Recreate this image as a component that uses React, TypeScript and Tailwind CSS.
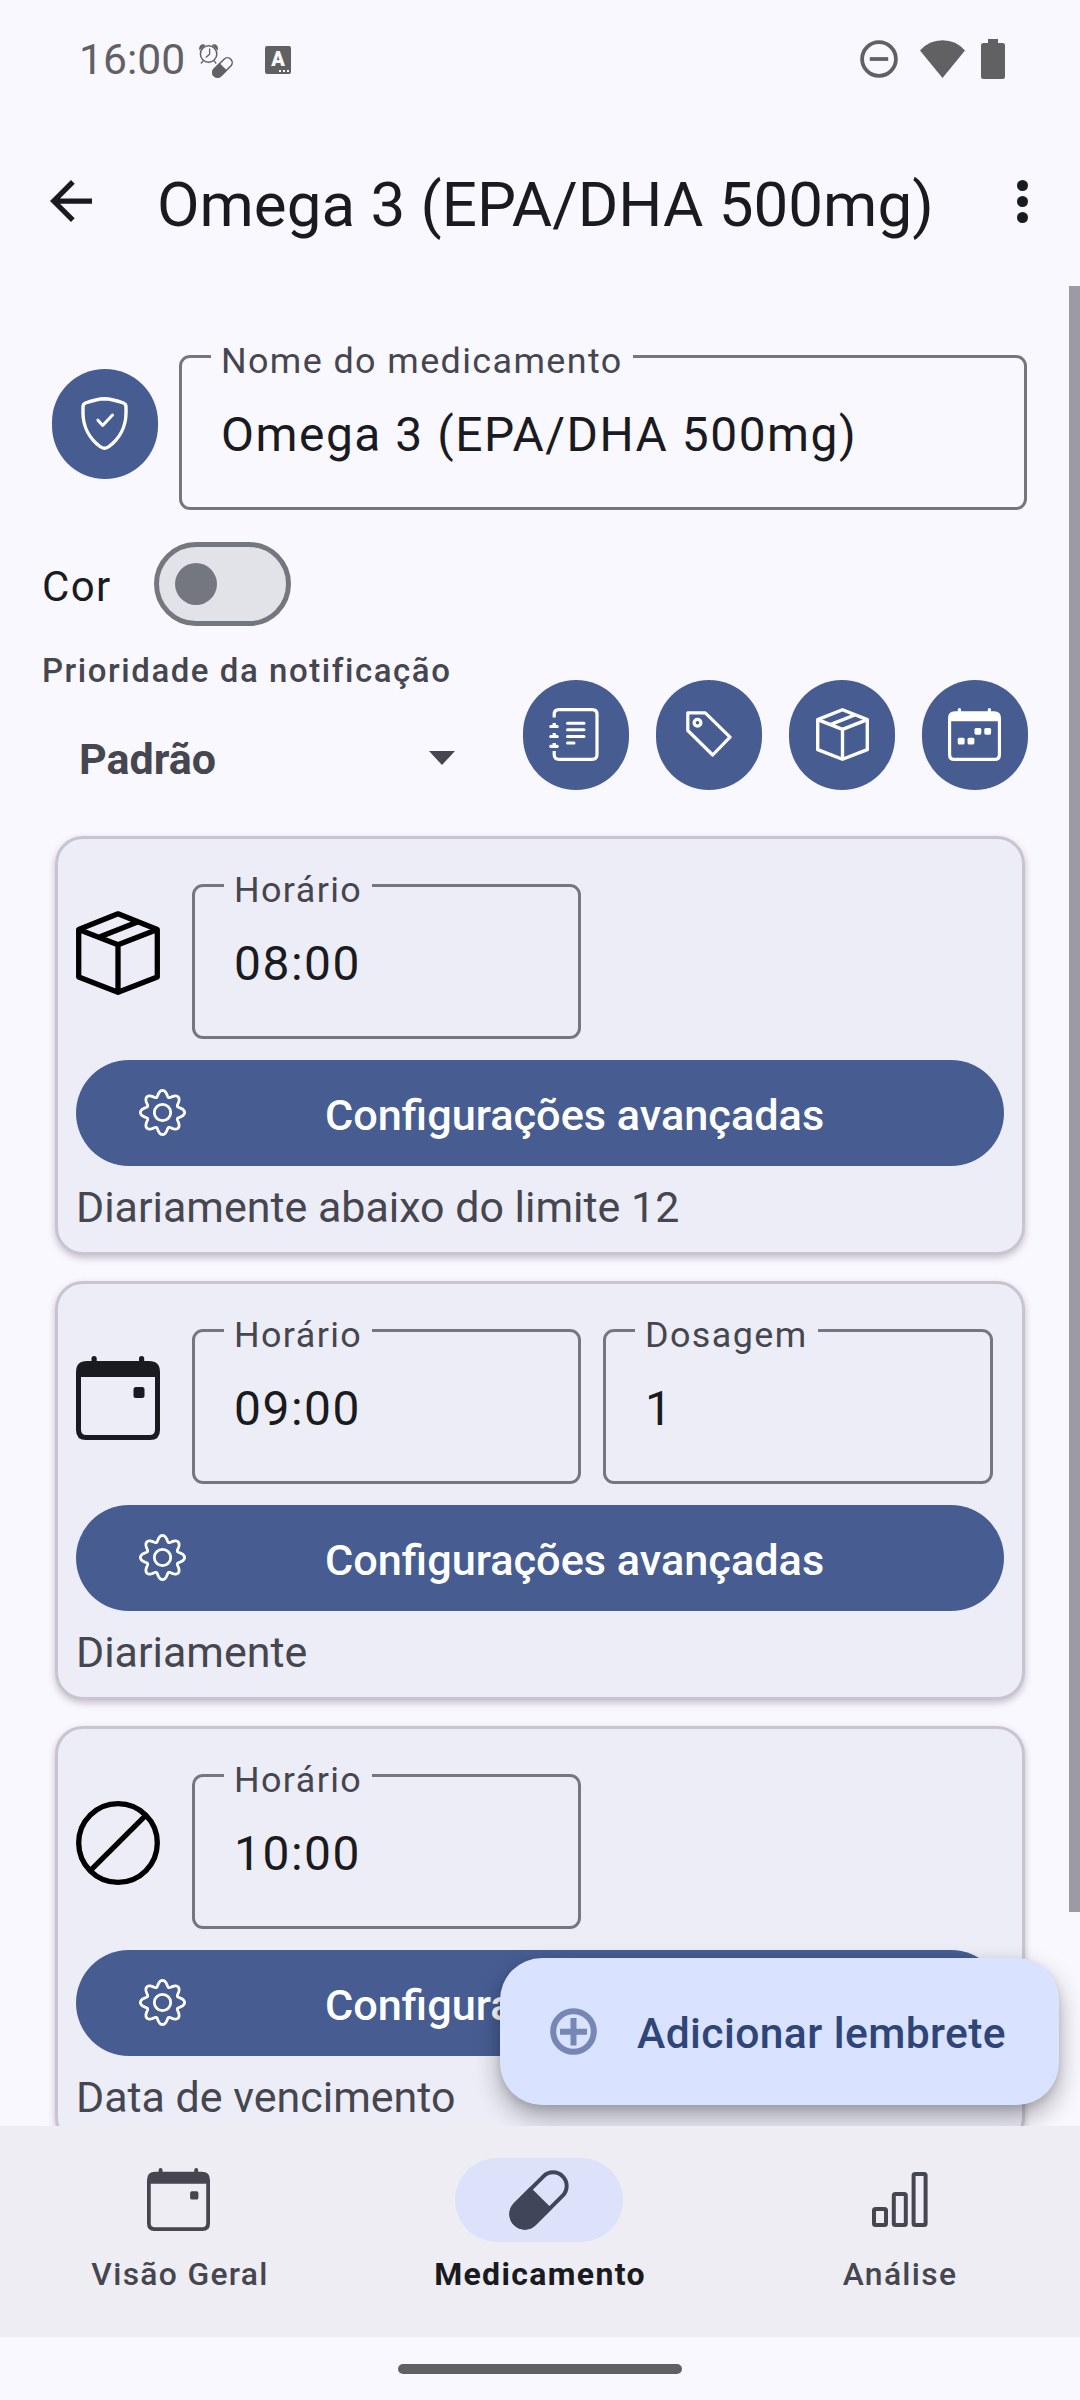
import React from "react";

type IconProps = { className?: string };

const gearPath = (() => {
  const points: string[] = [];
  for (let i = 0; i < 160; i++) {
    const t = (i / 160) * Math.PI * 2;
    const r = 19.1 + 3 * Math.cos(8 * t);
    const a = t + 0.02 * Math.sin(8 * t);
    points.push(`${(23.5 + r * Math.cos(a)).toFixed(2)} ${(23.5 + r * Math.sin(a)).toFixed(2)}`);
  }
  return `M${points.join("L")}Z`;
})();

function GearIcon({ className }: IconProps) {
  return (
    <svg viewBox="0 0 47 47" className={className} fill="none" stroke="currentColor" strokeWidth="2.8">
      <path d={gearPath} strokeLinejoin="round" />
      <circle cx="23.5" cy="23.5" r="8.2" />
    </svg>
  );
}

function BoxIcon({ className }: IconProps) {
  return (
    <svg viewBox="0 0 84 84" className={className} fill="none" stroke="currentColor" strokeWidth="5.3" strokeLinejoin="round">
      <path d="M42 2.8L81.3 18.5V66L42 81.3L2.7 66V18.5Z" />
      <path d="M2.7 18.5L42 33.8L81.3 18.5M42 33.8V81M23.5 26L61.5 11" />
    </svg>
  );
}

function CalendarIcon({ className, week = false }: IconProps & { week?: boolean }) {
  return (
    <svg viewBox="0 0 84 84" className={className} fill="currentColor">
      <rect x="15.500" y="0" width="5.200" height="12" rx="2.600" />
      <rect x="63" y="0" width="5.200" height="12" rx="2.600" />
      <path
        fillRule="evenodd"
        d="M11 5H73Q84 5 84 16V74Q84 84 74 84H10Q0 84 0 74V16Q0 5 11 5ZM5 21V73.500Q5 79 10.500 79H73.500Q79 79 79 73.500V21Z"
      />
      {week ? (
        <>
          <rect x="42" y="31.500" width="10.800" height="10.800" rx="2.500" />
          <rect x="57.500" y="31.500" width="10.800" height="10.800" rx="2.500" />
          <rect x="15.500" y="47" width="10.800" height="10.800" rx="2.500" />
          <rect x="31" y="47" width="10.800" height="10.800" rx="2.500" />
        </>
      ) : (
        <rect x="57.500" y="31" width="11" height="11" rx="2.500" />
      )}
    </svg>
  );
}

function ProhibitIcon({ className }: IconProps) {
  return (
    <svg viewBox="0 0 84 84" className={className} fill="none" stroke="currentColor" strokeWidth="5.300">
      <circle cx="42" cy="42" r="39.300" />
      <path d="M14.300 69.700L69.700 14.300" />
    </svg>
  );
}

function ShieldIcon({ className }: IconProps) {
  return (
    <svg viewBox="0 0 47 53" className={className} fill="none" stroke="currentColor" strokeWidth="3.400" strokeLinecap="round" strokeLinejoin="round">
      <path d="M23.500 1.700C30 1.900 37 4 42.500 6Q45 7 45 10V16C45 30 38 42 28 49.500Q23.500 52.800 19 49.500C9 42 2 30 2 16V10Q2 7 4.500 6C10 4 17 1.900 23.500 1.700Z" />
      <path d="M16.900 23.200L21.700 28.500L31.500 18" strokeWidth="3" />
    </svg>
  );
}

function NotebookIcon({ className }: IconProps) {
  return (
    <svg viewBox="0 0 50 53" className={className} fill="none" stroke="currentColor" strokeWidth="3.200">
      <path d="M5.200 9.500V6.500Q5.200 1.700 10 1.700H43.200Q48 1.700 48 6.500V46.500Q48 51.300 43.200 51.300H10Q5.200 51.300 5.200 46.500V43" />
      <path strokeLinecap="round" d="M1.800 18.500H8.200M1.800 28.500H8.200M1.800 38.300H8.200" />
      <path d="M5.200 15V19M5.200 25V29M5.200 35V39" />
      <path strokeLinecap="round" strokeWidth="3" d="M18.500 15.200H35M18.500 21.800H35M18.500 28.400H35M18.500 35H25" />
    </svg>
  );
}

function TagIcon({ className }: IconProps) {
  return (
    <svg viewBox="0 0 46 46" className={className} fill="none" stroke="currentColor" strokeWidth="3.200" strokeLinejoin="round">
      <path d="M1.800 1.800H19.300L44 26.200L26.700 44L1.800 19.500Z" />
      <circle cx="11.500" cy="11.800" r="3.400" />
    </svg>
  );
}

function PillIcon({ className }: IconProps) {
  return (
    <svg viewBox="0 0 60 60" className={className}>
      <g transform="rotate(-45 30 30)">
        <rect x="-3.500" y="16.400" width="67" height="27.200" rx="13.600" fill="none" stroke="currentColor" strokeWidth="4" />
        <path fill="currentColor" d="M10 14.500H33V45.500H10A15.500 15.500 0 0 1 10 14.500Z" />
      </g>
    </svg>
  );
}

function BarsIcon({ className }: IconProps) {
  return (
    <svg viewBox="0 0 56 55" className={className} fill="none" stroke="currentColor" strokeWidth="4">
      <rect x="2" y="37" width="12" height="16" rx="1.500" />
      <rect x="21.800" y="22" width="12" height="31" rx="1.500" />
      <rect x="41.600" y="2" width="12" height="51" rx="1.500" />
    </svg>
  );
}

function AlarmPillIcon({ className }: IconProps) {
  return (
    <svg viewBox="0 0 34 34" className={className} fill="none" stroke="currentColor">
      <circle cx="9.600" cy="10" r="8.200" strokeWidth="1.500" />
      <path strokeWidth="1.300" d="M10.600 4.500V10.200L6.800 13.600M4.200 16.800L2 19.500M15 16.800L17.200 19.500" />
      <path fill="currentColor" stroke="none" d="M0.500 6.500C-1 1.800 3 -1.200 6.500 1ZM18.700 6.500C20.200 1.800 16.200 -1.200 12.700 1Z" />
      <g transform="translate(13 13) scale(0.350)">
        <g transform="rotate(-45 30 30)">
          <rect x="-3.500" y="16.400" width="67" height="27.200" rx="13.600" strokeWidth="4.500" />
          <path fill="currentColor" stroke="none" d="M10 14.500H33V45.500H10A15.500 15.500 0 0 1 10 14.500Z" />
        </g>
      </g>
    </svg>
  );
}

function StatusBar() {
  return (
    <header className="flex h-[118px] shrink-0 items-center pl-[79px] pr-[75px] text-[#616164]">
      <span className="text-[42.6px] leading-[50px]">16:00</span>
      <AlarmPillIcon className="ml-[14px] mt-[3px] size-[34px]" />
      <div className="relative ml-[32px] mt-[2px] flex h-[28px] w-[26px] justify-center rounded-[2px] bg-[#616164]">
        <span className="text-[20px] font-black leading-[27px] text-[#f9f8ff]">A</span>
        <span className="absolute bottom-[2px] right-[2px] flex gap-[2px]">
          <i className="size-[2px] bg-[#f9f8ff]" />
          <i className="size-[2px] bg-[#f9f8ff]" />
          <i className="size-[2px] bg-[#f9f8ff]" />
        </span>
      </div>
      <svg viewBox="0 0 38 38" className="ml-auto size-[38px]" fill="none" stroke="currentColor" strokeWidth="3.800">
        <circle cx="19" cy="19" r="16.900" />
        <path d="M9.800 19H28.200" />
      </svg>
      <svg viewBox="0 0 45 38" className="ml-[22px] h-[38px] w-[45px]" fill="currentColor">
        <path d="M0 10.500Q9 0.300 22.500 0.300T45 10.500L22.500 38Z" />
      </svg>
      <svg viewBox="0 0 24 40" className="ml-[16px] h-[40px] w-[24px]" fill="currentColor">
        <path d="M7 0H17V4H21.500Q24 4 24 6.500V37.500Q24 40 21.500 40H2.500Q0 40 0 37.500V6.500Q0 4 2.500 4H7Z" />
      </svg>
    </header>
  );
}

function AppBar() {
  return (
    <div className="flex h-[166px] shrink-0 items-center pl-[50px] pr-[52px] text-[#1a1b20]">
      <svg viewBox="4 4 16 16" className="size-[42px]" fill="currentColor">
        <path d="M20 11H7.830l5.590-5.590L12 4l-8 8 8 8 1.410-1.410L7.830 13H20v-2z" />
      </svg>
      <h1 className="ml-[65px] pt-[7px] text-[61.9px] leading-[72px] whitespace-nowrap">Omega 3 (EPA/DHA 500mg)</h1>
      <div className="ml-auto flex flex-col gap-[5px]">
        <i className="size-[11px] rounded-full bg-current" />
        <i className="size-[11px] rounded-full bg-current" />
        <i className="size-[11px] rounded-full bg-current" />
      </div>
    </div>
  );
}

function OutlinedField({ label, value, className, labelClass }: { label: string; value: string; className: string; labelClass: string }) {
  return (
    <div className={`relative h-[155px] rounded-[11px] border-[3px] border-[#757780] pl-[39px] pt-[49px] ${className}`}>
      <span className={`absolute left-[29px] top-[-18px] px-[10px] text-[35.9px] leading-[42px] tracking-[0.039em] whitespace-nowrap text-[#45464f] ${labelClass}`}>
        {label}
      </span>
      <span className="block text-[47.9px] leading-[56px] tracking-[0.032em] whitespace-nowrap text-[#1a1b20]">{value}</span>
    </div>
  );
}

function RoundButton({ children, className = "" }: { children: React.ReactNode; className?: string }) {
  return (
    <button className={`flex h-[110px] w-[106px] shrink-0 items-center justify-center rounded-full bg-[#475d92] text-white ${className}`}>
      {children}
    </button>
  );
}

type Reminder = { icon: React.ReactNode; time: string; dose?: string; note: string };

const reminders: Reminder[] = [
  { icon: <BoxIcon className="size-[84px] text-black" />, time: "08:00", note: "Diariamente abaixo do limite 12" },
  { icon: <CalendarIcon className="size-[84px] text-[#1a1b20]" />, time: "09:00", dose: "1", note: "Diariamente" },
  { icon: <ProhibitIcon className="size-[84px] text-black" />, time: "10:00", note: "Data de vencimento" },
];

function ReminderCard({ icon, time, dose, note }: Reminder) {
  return (
    <article className="h-[419px] shrink-0 rounded-[28px] border-[3px] border-[#c9c5d0] bg-[#ecedf6] px-[18px] pt-[45px] shadow-[0_3px_7px_rgba(60,40,60,0.28)]">
      <div className="flex">
        <div className="mt-[27px] mr-[32px]">{icon}</div>
        <OutlinedField label="Horário" value={time} className="w-[389px]" labelClass="bg-[#ecedf6]" />
        {dose && <OutlinedField label="Dosagem" value={dose} className="ml-[22px] w-[390px]" labelClass="bg-[#ecedf6]" />}
      </div>
      <button className="mt-[21px] flex h-[106px] w-full items-center rounded-full bg-[#475d92] pl-[63px] text-white">
        <GearIcon className="mb-[1px] size-[47px]" />
        <span className="ml-[139px] pt-[5px] text-[43.25px] font-medium leading-[50px] whitespace-nowrap">Configurações avançadas</span>
      </button>
      <p className="mt-[16px] text-[42.95px] leading-[50px] text-[#45464f]">{note}</p>
    </article>
  );
}

function NavItem({ icon, label, active = false }: { icon: React.ReactNode; label: string; active?: boolean }) {
  return (
    <div className="flex flex-col items-center pt-[32px]">
      <div className={active ? "mr-[2px] flex h-[84px] w-[168px] items-center justify-center rounded-full bg-[#dce2f9] text-[#404659]" : "flex h-[84px] w-[168px] items-center justify-center text-[#45464f]"}>
        {icon}
      </div>
      <span className={active ? "mt-[12px] text-[32px] font-bold leading-[40px] tracking-[0.0417em] text-[#1a1b20]" : "mt-[12px] text-[31.8px] font-medium leading-[40px] tracking-[0.0417em] text-[#45464f]"}>
        {label}
      </span>
    </div>
  );
}

export default function App() {
  return (
    <div className="flex h-[2400px] w-[1080px] flex-col overflow-hidden bg-[#faf8ff] font-['Roboto',sans-serif]">
      <StatusBar />
      <AppBar />

      <main className="relative flex h-[1842px] shrink-0 flex-col overflow-hidden pt-[71px]">
        <div className="flex shrink-0 pl-[52px]">
          <RoundButton className="mt-[14px]">
            <ShieldIcon className="mr-[1px] mb-[1px] h-[53px] w-[47px]" />
          </RoundButton>
          <OutlinedField label="Nome do medicamento" value="Omega 3 (EPA/DHA 500mg)" className="ml-[21px] w-[848px]" labelClass="bg-[#faf8ff]" />
        </div>

        <div className="mt-[32px] flex shrink-0 items-center pl-[42px]">
          <span className="w-[112px] pt-[6px] text-[42px] leading-[50px] tracking-[1.3px] text-[#1a1b20]">Cor</span>
          <div className="flex h-[84px] w-[137px] items-center rounded-full border-[5.5px] border-[#757780] bg-[#e2e2e9] pl-[16px]">
            <i className="size-[42px] rounded-full bg-[#757780]" />
          </div>
        </div>

        <div className="mt-[25px] flex h-[139px] shrink-0 pl-[42px] pr-[52px]">
          <div className="w-[420px]">
            <p className="text-[33px] font-medium leading-[40px] tracking-[1.55px] whitespace-nowrap text-[#45464f]">Prioridade da notificação</p>
            <div className="mt-[43px] flex items-center pl-[37px] text-[#45464f]">
              <span className="text-[43px] font-bold leading-[50px]">Padrão</span>
              <svg viewBox="0 0 26 14" className="mb-[2px] ml-auto mr-[7px] h-[14px] w-[26px]" fill="currentColor">
                <path d="M0 0H26L13 14Z" />
              </svg>
            </div>
          </div>
          <div className="ml-auto mt-[29px] flex gap-[27px]">
            <RoundButton>
              <NotebookIcon className="mr-[4px] mb-[1px] h-[53px] w-[50px]" />
            </RoundButton>
            <RoundButton>
              <TagIcon className="mr-[1px] mb-[3px] size-[46px]" />
            </RoundButton>
            <RoundButton>
              <BoxIcon className="mb-[1px] size-[53px]" />
            </RoundButton>
            <RoundButton>
              <CalendarIcon week className="mr-[1px] mb-[1px] size-[53px]" />
            </RoundButton>
          </div>
        </div>

        <section className="mt-[46px] flex flex-col gap-[26px] pl-[55px] pr-[55px]">
          {reminders.map((r) => (
            <ReminderCard key={r.time} {...r} />
          ))}
        </section>

        <div className="absolute right-0 top-[2px] h-[1626px] w-[11px] bg-[#9c9aa4]" />

        <button className="absolute bottom-[21px] right-[21px] flex h-[147px] w-[559px] items-center rounded-[42px] bg-[#d9e2ff] pl-[50px] text-[#2f4578] shadow-[0_12px_26px_rgba(0,0,0,0.32),0_3px_8px_rgba(0,0,0,0.1)]">
          <svg viewBox="0 0 47 47" className="size-[47px] text-[#7687b4]" fill="none" stroke="currentColor" strokeWidth="6">
            <circle cx="23.500" cy="23.500" r="20.300" />
            <path d="M23.500 10V37.500M10 23.700H37" />
          </svg>
          <span className="ml-[40px] pt-[3px] text-[42.6px] font-medium leading-[50px] tracking-[0.4px] whitespace-nowrap">Adicionar lembrete</span>
        </button>
      </main>

      <nav className="grid h-[211px] shrink-0 grid-cols-3 bg-[#eeedf4]">
        <NavItem icon={<CalendarIcon className="mr-[3px] mb-[2px] size-[63px]" />} label="Visão Geral" />
        <NavItem icon={<PillIcon className="mb-[1px] size-[60px]" />} label="Medicamento" active />
        <NavItem icon={<BarsIcon className="mr-[1px] mb-[1px] h-[55px] w-[56px]" />} label="Análise" />
      </nav>

      <div className="flex flex-1 justify-center pt-[27px]">
        <div className="h-[10px] w-[284px] rounded-full bg-[#616164]" />
      </div>
    </div>
  );
}
